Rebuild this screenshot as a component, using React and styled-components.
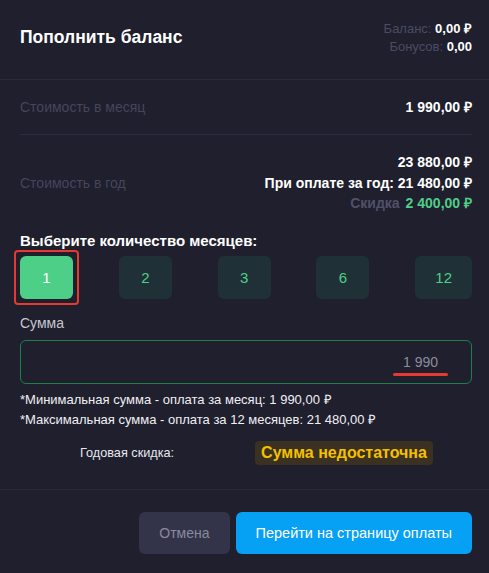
import React from "react";
import styled, { createGlobalStyle } from "styled-components";

const Global = createGlobalStyle`
  html, body { margin: 0; padding: 0; background: #1f1f2d; }
  body { font-family: "Liberation Sans", Arial, sans-serif; }
  * { box-sizing: border-box; }
`;

const Modal = styled.div`
  width: 489px;
  height: 573px;
  background: #1f1f2d;
  color: #fff;
  display: flex;
  flex-direction: column;
`;

const Header = styled.div`
  height: 80px;
  padding: 0 17px 0 20px;
  display: flex;
  align-items: center;
  justify-content: space-between;
  border-bottom: 1px solid #2a2a3a;
`;

const Title = styled.h2`
  margin: 0;
  font-size: 17.5px;
  font-weight: 700;
  color: #ffffff;
  padding-bottom: 4px;
`;

const Balance = styled.div`
  display: flex;
  flex-direction: column;
  align-items: flex-end;
  font-size: 13px;
  line-height: 18px;
  margin-top: -4px;
`;

const BalanceLine = styled.div`
  color: #4b4b63;
  b { color: #ffffff; font-weight: 700; }
`;

const Body = styled.div`
  flex: 1;
  padding: 0 17px 0 20px;
  display: flex;
  flex-direction: column;
`;

const PriceRow = styled.div`
  display: flex;
  align-items: center;
  justify-content: space-between;
  min-height: ${(p) => p.h}px;
  border-bottom: ${(p) => (p.line ? "1px solid #2c2c40" : "none")};
  padding-top: ${(p) => p.pt || 0}px;
`;

const Muted = styled.span`
  font-size: 14px;
  color: #45455c;
`;

const Values = styled.div`
  display: flex;
  flex-direction: column;
  align-items: flex-end;
  font-size: 14px;
  font-weight: 700;
  line-height: 20.5px;
`;

const Discount = styled.div`
  color: #4ecf87;
  span { color: #50506a; margin-right: 6px; }
`;

const SectionTitle = styled.div`
  margin-top: 18px;
  font-size: 15px;
  font-weight: 700;
  color: #ffffff;
`;

const Months = styled.div`
  margin-top: 7px;
  display: flex;
  justify-content: space-between;
`;

const MonthWrap = styled.div`
  position: relative;
`;

const Month = styled.button`
  height: 43px;
  min-width: 53px;
  padding: 0 20px;
  border: none;
  border-radius: 6px;
  font-family: inherit;
  font-size: 15px;
  background: ${(p) => (p.active ? "#4ecf87" : "#1f3137")};
  color: ${(p) => (p.active ? "#ffffff" : "#4ecf87")};
  cursor: pointer;
`;

const Highlight = styled.div`
  position: absolute;
  left: -6px;
  top: -6px;
  right: -6px;
  bottom: -6px;
  border: 2px solid #e53a2f;
  border-radius: 4px;
  pointer-events: none;
`;

const Label = styled.div`
  margin-top: 16px;
  font-size: 14px;
  color: #c8c8d2;
`;

const InputBox = styled.div`
  margin-top: 9px;
  height: 44px;
  border: 1px solid #1e7e4c;
  border-radius: 6px;
  display: flex;
  align-items: center;
  justify-content: flex-end;
  padding-right: 33px;
`;

const InputValue = styled.span`
  position: relative;
  font-size: 14px;
  color: #8d8d9c;
`;

const Underline = styled.span`
  position: absolute;
  left: -10px;
  right: -10px;
  bottom: -6px;
  height: 3px;
  border-radius: 2px;
  background: #e53a2f;
`;

const Notes = styled.div`
  margin-top: 6px;
  font-size: 13px;
  line-height: 20px;
  color: #f0f0f4;
`;

const DiscountRow = styled.div`
  margin-top: 11px;
  display: flex;
  align-items: center;
  padding-left: 60px;
  gap: 81px;
`;

const SmallLabel = styled.span`
  font-size: 12.7px;
  color: #e8e8ee;
`;

const Badge = styled.span`
  height: 24px;
  padding: 0 6px;
  border-radius: 4px;
  background: #3a3122;
  color: #f5c000;
  font-size: 16px;
  font-weight: 700;
  display: flex;
  align-items: center;
`;

const Footer = styled.div`
  height: 84px;
  border-top: 1px solid #2a2a3a;
  padding: 22px 17px 0 20px;
  display: flex;
  align-items: flex-start;
  justify-content: flex-end;
  gap: 6px;
`;

const Button = styled.button`
  height: 42px;
  border: none;
  border-radius: 6px;
  font-family: inherit;
  font-size: ${(p) => (p.primary ? 14.5 : 14)}px;
  padding: 0 20px;
  background: ${(p) => (p.primary ? "#06a0f4" : "#33344a")};
  color: ${(p) => (p.primary ? "#ffffff" : "#8a8a9c")};
  cursor: pointer;
`;

const months = [1, 2, 3, 6, 12];

export default function App() {
  return (
    <>
      <Global />
      <Modal>
        <Header>
          <Title>Пополнить баланс</Title>
          <Balance>
            <BalanceLine>
              Баланс: <b>0,00 ₽</b>
            </BalanceLine>
            <BalanceLine>
              Бонусов: <b>0,00</b>
            </BalanceLine>
          </Balance>
        </Header>
        <Body>
          <PriceRow h={55} line>
            <Muted>Стоимость в месяц</Muted>
            <Values>1 990,00 ₽</Values>
          </PriceRow>
          <PriceRow h={64} pt={17}>
            <Muted>Стоимость в год</Muted>
            <Values>
              <div>23 880,00 ₽</div>
              <div>При оплате за год: 21 480,00 ₽</div>
              <Discount>
                <span>Скидка</span>2 400,00 ₽
              </Discount>
            </Values>
          </PriceRow>
          <SectionTitle>Выберите количество месяцев:</SectionTitle>
          <Months>
            {months.map((m) => (
              <MonthWrap key={m}>
                <Month active={m === 1}>{m}</Month>
                {m === 1 && <Highlight />}
              </MonthWrap>
            ))}
          </Months>
          <Label>Сумма</Label>
          <InputBox>
            <InputValue>
              1 990
              <Underline />
            </InputValue>
          </InputBox>
          <Notes>
            <div>*Минимальная сумма - оплата за месяц: 1 990,00 ₽</div>
            <div>*Максимальная сумма - оплата за 12 месяцев: 21 480,00 ₽</div>
          </Notes>
          <DiscountRow>
            <SmallLabel>Годовая скидка:</SmallLabel>
            <Badge>Сумма недостаточна</Badge>
          </DiscountRow>
        </Body>
        <Footer>
          <Button>Отмена</Button>
          <Button primary>Перейти на страницу оплаты</Button>
        </Footer>
      </Modal>
    </>
  );
}
